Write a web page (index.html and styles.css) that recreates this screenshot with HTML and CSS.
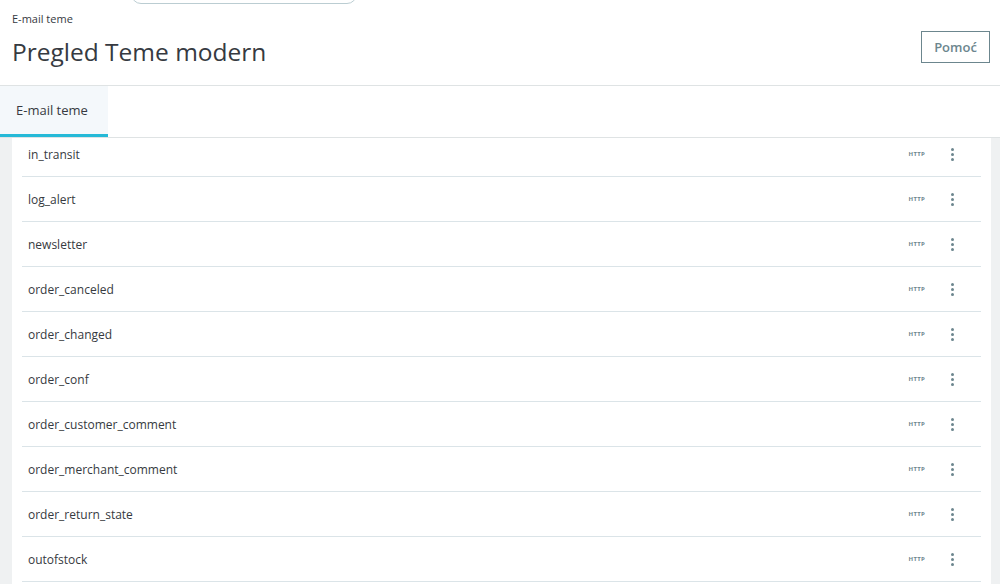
FILE: index.html
```html
<!DOCTYPE html>
<html lang="hr">

<head>
    <meta charset="UTF-8">
    <title>Pregled Teme modern</title>
    <link rel="stylesheet" href="styles.css">
</head>

<body>
    <div class="search-stub"></div>
    <header class="page-head">
        <div class="head-text">
            <div class="breadcrumb">E-mail teme</div>
            <h1>Pregled Teme modern</h1>
        </div>
        <button class="btn-help">Pomoć</button>
    </header>
    <nav class="tabs">
        <a class="tab active">E-mail teme</a>
    </nav>
    <div class="content">
        <div class="panel">
            <ul class="layout-list">
                <li><span class="name">in_transit</span><span class="type">HTTP</span><span class="kebab"><i></i><i></i><i></i></span></li>
                <li><span class="name">log_alert</span><span class="type">HTTP</span><span class="kebab"><i></i><i></i><i></i></span></li>
                <li><span class="name">newsletter</span><span class="type">HTTP</span><span class="kebab"><i></i><i></i><i></i></span></li>
                <li><span class="name">order_canceled</span><span class="type">HTTP</span><span class="kebab"><i></i><i></i><i></i></span></li>
                <li><span class="name">order_changed</span><span class="type">HTTP</span><span class="kebab"><i></i><i></i><i></i></span></li>
                <li><span class="name">order_conf</span><span class="type">HTTP</span><span class="kebab"><i></i><i></i><i></i></span></li>
                <li><span class="name">order_customer_comment</span><span class="type">HTTP</span><span class="kebab"><i></i><i></i><i></i></span></li>
                <li><span class="name">order_merchant_comment</span><span class="type">HTTP</span><span class="kebab"><i></i><i></i><i></i></span></li>
                <li><span class="name">order_return_state</span><span class="type">HTTP</span><span class="kebab"><i></i><i></i><i></i></span></li>
                <li><span class="name">outofstock</span><span class="type">HTTP</span><span class="kebab"><i></i><i></i><i></i></span></li>
            </ul>
        </div>
    </div>
</body>

</html>
```

FILE: styles.css
```css
html,
body {
    height: 100%;
}

body {
    margin: 0;
    font-family: "Open Sans", Arial, sans-serif;
    color: #363a41;
    background-color: #fff;
    display: flex;
    flex-direction: column;
    overflow: hidden;
}

.search-stub {
    width: 224px;
    height: 30px;
    margin: -28px 0 0 131px;
    border: 1px solid #bbcdd2;
    border-radius: 10px;
    flex-shrink: 0;
}

.page-head {
    display: flex;
    justify-content: space-between;
    align-items: flex-start;
    padding: 7px 10px 0 12px;
    height: 82px;
    border-bottom: 1px solid #dfe3e4;
    box-sizing: border-box;
    flex-shrink: 0;
}

.breadcrumb {
    font-size: 11px;
    line-height: 16px;
}

h1 {
    margin: 10px 0 0;
    font-size: 24.5px;
    font-weight: 400;
    line-height: 30px;
}

.btn-help {
    margin-top: 20px;
    width: 69px;
    height: 32px;
    background: #fff;
    border: 1px solid #6c868e;
    color: #6c868e;
    font-family: inherit;
    font-size: 13px;
    font-weight: 600;
}

.tabs {
    display: flex;
    height: 51px;
    border-bottom: 1px solid #dfe3e4;
    flex-shrink: 0;
}

.tab {
    display: flex;
    align-items: center;
    padding: 0 16px;
    width: 108px;
    box-sizing: border-box;
    background-color: #f4f8fb;
    font-size: 13px;
    border-bottom: 3px solid #25b9d7;
}

.content {
    flex: 1;
    padding: 0 9px 0 12px;
    background-color: #eff1f2;
    overflow: hidden;
}

.panel {
    height: 100%;
    background-color: #fff;
    padding: 0 10px;
    overflow: hidden;
}

.layout-list {
    list-style: none;
    margin: -6px 0 0;
    padding: 0;
}

.layout-list li {
    display: flex;
    align-items: center;
    height: 45px;
    padding: 0 6px;
    border-bottom: 1px solid #dbe4e8;
    box-sizing: border-box;
    font-size: 12px;
}

.name {
    flex: 1;
}

.type {
    font-size: 6px;
    font-weight: 700;
    color: #6c868e;
    letter-spacing: 0.3px;
}

.kebab {
    display: flex;
    flex-direction: column;
    gap: 2px;
    margin: 0 21px 0 26px;
}

.kebab i {
    width: 3px;
    height: 3px;
    border-radius: 50%;
    background-color: #6c868e;
}
```
